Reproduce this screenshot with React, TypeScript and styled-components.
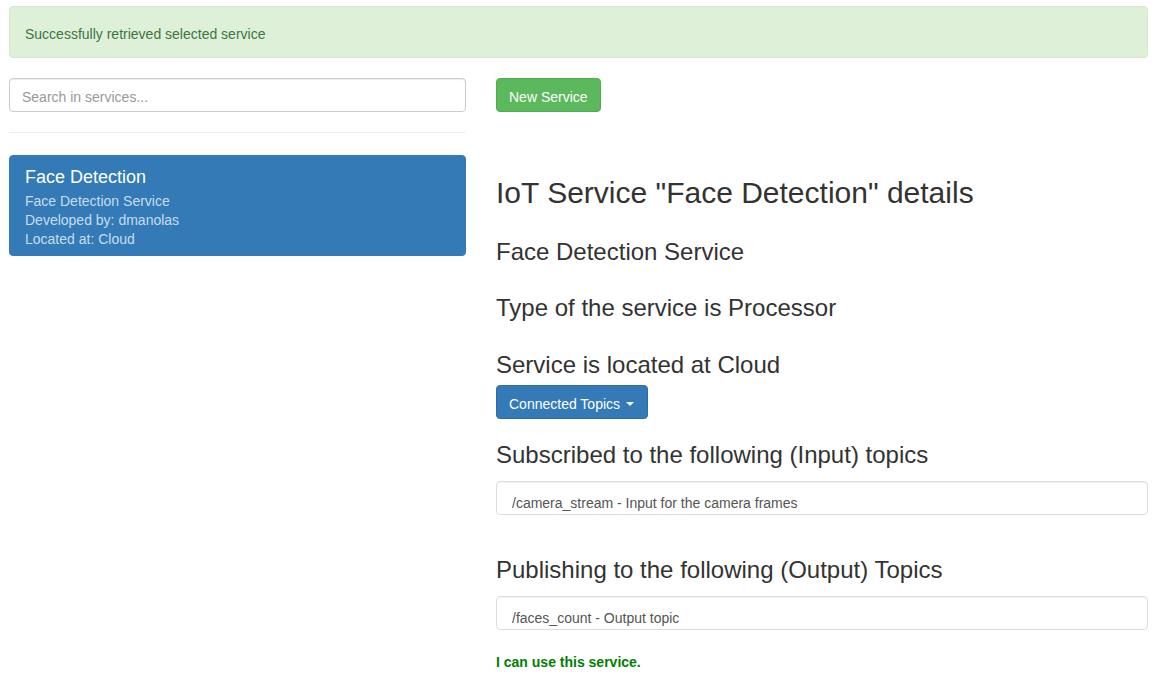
import React from "react";
import styled, { createGlobalStyle } from "styled-components";

const GlobalStyle = createGlobalStyle`
  html, body {
    margin: 0;
    padding: 0;
    background: #fff;
  }
  body {
    font-family: "Liberation Sans", Arial, sans-serif;
    font-size: 14px;
    line-height: 1.42857;
    color: #333;
  }
  * {
    box-sizing: border-box;
  }
`;

const Page = styled.div`
  padding: 6px 18px 20px 9px;
`;

const Alert = styled.div`
  padding: 18px 15px 12px;
  margin-bottom: 20px;
  border: 1px solid #d6e9c6;
  border-radius: 4px;
  background: #dff0d8;
  color: #3c763d;
`;

const Row = styled.div`
  display: grid;
  grid-template-columns: 457px 1fr;
  column-gap: 30px;
  align-items: start;
`;

const Column = styled.div`
  display: flex;
  flex-direction: column;
  align-items: flex-start;
`;

const SearchInput = styled.input`
  display: block;
  width: 100%;
  height: 34px;
  padding: 8px 12px 4px;
  font-family: inherit;
  font-size: 14px;
  line-height: 20px;
  color: #555;
  border: 1px solid #ccc;
  border-radius: 4px;
  box-shadow: inset 0 1px 1px rgba(0, 0, 0, 0.075);
  outline: none;

  &::placeholder {
    color: #999;
  }
`;

const Rule = styled.hr`
  width: 100%;
  margin: 20px 0 22px;
  border: 0;
  border-top: 1px solid #eee;
`;

const ServiceItem = styled.a<{ $active?: boolean }>`
  display: block;
  width: 100%;
  padding: 12px 15px 6px;
  border: 1px solid ${(p) => (p.$active ? "#337ab7" : "#ddd")};
  border-radius: 4px;
  background: ${(p) => (p.$active ? "#337ab7" : "#fff")};
  color: ${(p) => (p.$active ? "#fff" : "#555")};
  text-decoration: none;
`;

const ItemHeading = styled.h4`
  margin: 0 0 4px;
  font-size: 18px;
  font-weight: 500;
  line-height: 1.1;
`;

const ItemText = styled.p`
  margin: 0;
  line-height: 19px;
  color: #c7ddef;
`;

const Button = styled.button<{ $variant: "success" | "primary" }>`
  display: inline-flex;
  align-items: center;
  height: 34px;
  padding: 8px 12px 4px;
  font-family: inherit;
  font-size: 14px;
  line-height: 20px;
  color: #fff;
  border-radius: 4px;
  cursor: pointer;
  border: 1px solid
    ${(p) => (p.$variant === "success" ? "#4cae4c" : "#2e6da4")};
  background: ${(p) => (p.$variant === "success" ? "#5cb85c" : "#337ab7")};
`;

const Caret = styled.span`
  display: inline-block;
  width: 0;
  height: 0;
  margin-left: 6px;
  margin-right: 1px;
  border-top: 4px solid #fff;
  border-left: 4px solid transparent;
  border-right: 4px solid transparent;
`;

const Title = styled.h2`
  margin: 64px 0 10px;
  font-size: 30px;
  font-weight: 500;
  line-height: 1.1;
`;

const Subtitle = styled.h3<{ $top?: number; $bottom?: number }>`
  margin: ${(p) => p.$top ?? 20}px 0 ${(p) => p.$bottom ?? 10}px;
  font-size: 24px;
  font-weight: 500;
  line-height: 1.1;
`;

const TopicBox = styled.div<{ $top?: number; $gap?: number }>`
  width: 100%;
  height: 34px;
  margin-top: ${(p) => p.$top ?? 2}px;
  margin-bottom: ${(p) => p.$gap ?? 0}px;
  padding: 12px 15px 2px;
  color: #555;
  border: 1px solid #ddd;
  border-radius: 4px;
  box-shadow: inset 0 1px 1px rgba(0, 0, 0, 0.05);
`;

const Usable = styled.p`
  margin: 23px 0 0;
  font-weight: bold;
  color: #008000;
`;

export default function App() {
  return (
    <>
      <GlobalStyle />
      <Page>
        <Alert>Successfully retrieved selected service</Alert>
        <Row>
          <Column>
            <SearchInput placeholder="Search in services..." />
            <Rule />
            <ServiceItem $active>
              <ItemHeading>Face Detection</ItemHeading>
              <ItemText>Face Detection Service</ItemText>
              <ItemText>Developed by: dmanolas</ItemText>
              <ItemText>Located at: Cloud</ItemText>
            </ServiceItem>
          </Column>
          <Column>
            <Button $variant="success">New Service</Button>
            <Title>IoT Service "Face Detection" details</Title>
            <Subtitle>Face Detection Service</Subtitle>
            <Subtitle>Type of the service is Processor</Subtitle>
            <Subtitle $bottom={7}>Service is located at Cloud</Subtitle>
            <Button $variant="primary">
              Connected Topics <Caret />
            </Button>
            <Subtitle $top={23}>Subscribed to the following (Input) topics</Subtitle>
            <TopicBox $gap={22}>/camera_stream - Input for the camera frames</TopicBox>
            <Subtitle>Publishing to the following (Output) Topics</Subtitle>
            <TopicBox $top={3}>/faces_count - Output topic</TopicBox>
            <Usable>I can use this service.</Usable>
          </Column>
        </Row>
      </Page>
    </>
  );
}
